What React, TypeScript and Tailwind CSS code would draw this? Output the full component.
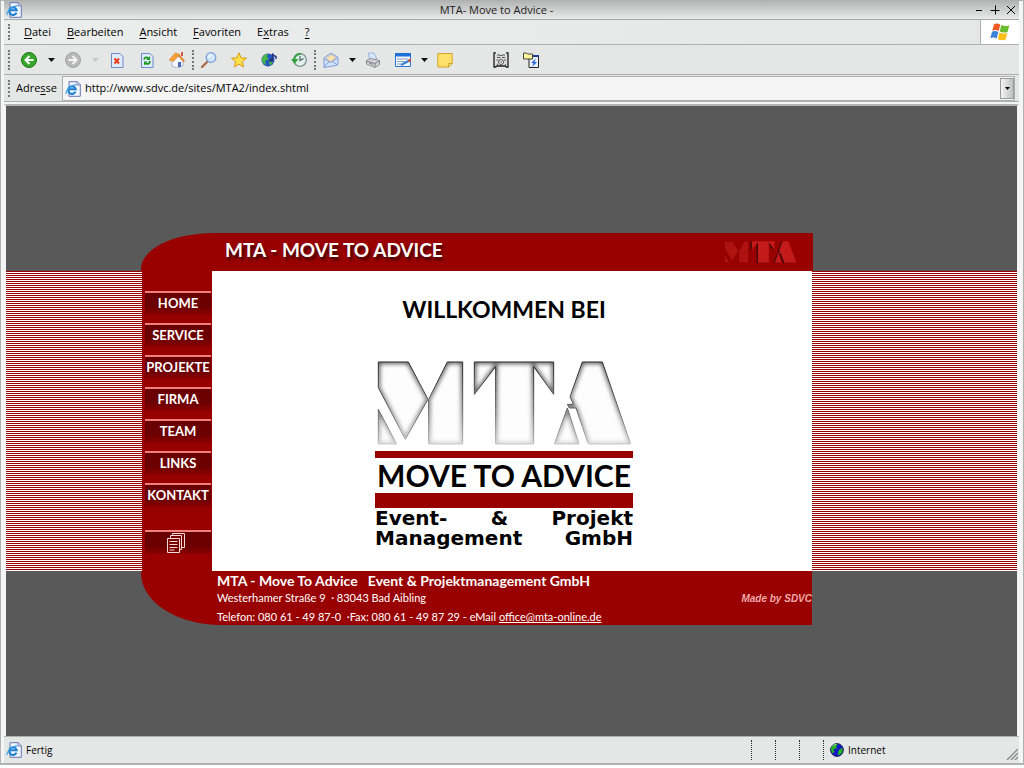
import React from "react";

const LINKS = ["HOME", "SERVICE", "PROJEKTE", "FIRMA", "TEAM", "LINKS", "KONTAKT"];

const MENU = [
    { pre: "", key: "D", post: "atei" },
    { pre: "", key: "B", post: "earbeiten" },
    { pre: "", key: "A", post: "nsicht" },
    { pre: "", key: "F", post: "avoriten" },
    { pre: "E", key: "x", post: "tras" },
    { pre: "", key: "?", post: "" },
];

const M_PATHS = [
    "M55 38H145L204 150L136 270L55 115Z",
    "M262 38H308V284H206V150Z",
    "M55 180L110 284H55Z",
];
const T_PATHS = ["M343 38H581V135L521 52V284H407V52L343 135Z"];
const A_PATHS = [
    "M667 38H727L812 284H685L648 176H628L622 165L640 165L630 142Z",
    "M622 176L657 284H583Z",
];

const BigLogo = () => (
    <svg viewBox="45 29 774 258" className="h-[86px] w-[258px]" role="img" aria-label="MTA">
        <defs>
            <linearGradient id="edge" x1="0" y1="36" x2="0" y2="286" gradientUnits="userSpaceOnUse">
                <stop offset="0" stopColor="#222" />
                <stop offset="0.6" stopColor="#666" />
                <stop offset="0.95" stopColor="#aaa" />
                <stop offset="1" stopColor="#ccc" />
            </linearGradient>
            <filter id="soft" x="-10%" y="-10%" width="120%" height="120%">
                <feGaussianBlur stdDeviation="7" />
            </filter>
        </defs>
        {[...M_PATHS, ...T_PATHS, ...A_PATHS].map((d, i) => (
            <g key={d}>
                <clipPath id={`letter-${i}`}>
                    <path d={d} />
                </clipPath>
                <path d={d} fill="#fdfdfd" />
                <g clipPath={`url(#letter-${i})`}>
                    <path d={d} fill="none" stroke="url(#edge)" strokeWidth="9" filter="url(#soft)" />
                </g>
                <path d={d} fill="none" stroke="url(#edge)" strokeWidth="3" />
            </g>
        ))}
    </svg>
);

const SmallLogo = () => (
    <svg viewBox="50 34 768 254" preserveAspectRatio="none" className="h-[22px] w-[73px]" aria-hidden="true">
        {[...T_PATHS, ...A_PATHS].map((d) => (
            <path key={d} d={d} fill="#3a0a0a" transform="translate(-14 4)" />
        ))}
        {M_PATHS.map((d) => (
            <path key={d} d={d} fill="#b01212" stroke="#7a0505" strokeWidth="5" />
        ))}
        {[...T_PATHS, ...A_PATHS].map((d) => (
            <path key={d} d={d} fill="#c41a1a" />
        ))}
    </svg>
);

const IePage = () => (
    <svg viewBox="0 0 16 16" className="h-4 w-4 shrink-0" aria-hidden="true">
        <path d="M4 .7h8.3L15.300 3.700V15.300H4z" fill="#f2f6ff" stroke="#6577ae" />
        <path d="M12 .7v3.300h3.300" fill="#c7d2ee" stroke="#6577ae" strokeWidth=".8" />
        <path d="M10.500 10.700A3.800 3.800 0 1 1 10.700 8.200H4" fill="none" stroke="#1d7fd0" strokeWidth="2.100" />
        <path d="M1.300 13C-.5 10 7 3.500 11.300 3.800" fill="none" stroke="#3ba0e6" strokeWidth="1.200" />
    </svg>
);

const Globe = () => (
    <svg viewBox="0 0 16 16" className="h-[14px] w-[14px] shrink-0" aria-hidden="true">
        <circle cx="8" cy="8" r="7.300" fill="#1419c8" stroke="#0b1640" />
        <path d="M2 4Q5 0 9 1.500L7 4L8 6L4 7L5 10L3 12Q0 8 2 4z" fill="#21b321" />
        <path d="M10 8L14 5.500Q15.500 9 12.500 12.500L9 14V11z" fill="#21b321" />
        <path d="M3 3.500Q5 1.500 7 2" stroke="#c8f0c0" fill="none" />
    </svg>
);

const WindowsFlag = () => (
    <svg viewBox="0 0 20 18" className="h-[18px] w-5" aria-hidden="true">
        <path d="M4 1.200Q7-.5 10.300 1.500L8.700 8Q5.500 6.200 2.300 7.700z" fill="#ef5a24" />
        <path d="M11.300 2Q15 4 19.300 2.200L17.600 8.900Q13.500 10.500 9.700 8.500z" fill="#6bbb2c" />
        <path d="M2 8.800Q5.200 7.200 8.400 9L6.700 15.500Q3.700 13.800.4 15.300z" fill="#3e82d6" />
        <path d="M9.400 9.500Q13.300 11.500 17.300 9.900L15.700 16.500Q11.700 18.200 7.800 16z" fill="#fbbf17" />
    </svg>
);

const ToolIcon = ({ children }: { children: React.ReactNode }) => (
    <svg viewBox="0 0 16 16" className="h-4 w-4" aria-hidden="true">
        {children}
    </svg>
);

const ToolButton = ({ label, children }: { label: string; children: React.ReactNode }) => (
    <button type="button" aria-label={label} className="flex h-6 w-[30px] items-center justify-center">
        <ToolIcon>{children}</ToolIcon>
    </button>
);

const Caret = ({ label, faded = false, narrow = false }: { label: string; faded?: boolean; narrow?: boolean }) => (
    <button
        type="button"
        aria-label={label}
        className={`flex h-6 items-center justify-center ${narrow ? "w-3" : "w-[14px]"}`}
    >
        <svg viewBox="0 0 7 4" className="h-1 w-[7px]" aria-hidden="true">
            <path d="M0 0h7L3.500 4z" fill={faded ? "#c8c8c8" : "#111"} />
        </svg>
    </button>
);

const Grip = () => <span className="my-1 w-0 self-stretch border-l-2 border-dotted border-[#777]" />;

const Toolbar = () => (
    <div className="flex h-[30px] items-center border-b border-[#adb0ae] bg-[#e5e7e6] pt-px pl-1" role="toolbar">
        <Grip />
        <span className="w-1" />
        <ToolButton label="Zurück">
            <circle cx="8" cy="8" r="7.500" fill="#36a52c" stroke="#1d7a18" />
            <path d="M8.500 4L4.500 8L8.500 12M5 8h7.500" fill="none" stroke="#fff" strokeWidth="2" />
        </ToolButton>
        <Caret label="Zurück-Verlauf" />
        <ToolButton label="Vorwärts">
            <circle cx="8" cy="8" r="7.500" fill="#b9b9b9" stroke="#a2a2a2" />
            <path d="M7.500 4L11.500 8L7.500 12M11 8H3.500" fill="none" stroke="#f4f4f4" strokeWidth="2" />
        </ToolButton>
        <Caret label="Vorwärts-Verlauf" faded />
        <ToolButton label="Abbrechen">
            <path d="M2.500 1.500h8.500l3 3V15.500H2.500z" fill="#dfeafc" stroke="#6a8ac8" />
            <path d="M5.500 6.500l4.500 5M10 6.500l-4.500 5" stroke="#ea3b18" strokeWidth="2" />
        </ToolButton>
        <ToolButton label="Aktualisieren">
            <path d="M2.500 1.500h8.500l3 3V15.500H2.500z" fill="#dfeafc" stroke="#6a8ac8" />
            <path d="M5 7.500Q5.500 5 8 5.500L9.500 6.500M11 9Q10.500 12.500 7.500 11.800L6 11" fill="none" stroke="#159a1b" strokeWidth="1.800" />
            <path d="M11 4v4H7.500zM5 13.500v-4h3.500z" fill="#159a1b" />
        </ToolButton>
        <ToolButton label="Startseite">
            <path d="M3 8v6l5 2 6-2V8L10 4z" fill="#f4f7ff" stroke="#8c9cc4" strokeWidth=".7" />
            <path d="M0 8L6.500.8L10.500 2.500L4.500 9.500z" fill="#f6a13b" stroke="#cf7b1f" strokeWidth=".5" />
            <path d="M10 2L16 9L14.500 10L9.500 4.500z" fill="#e27b1d" />
            <path d="M12 0h2v4h-2z" fill="#d05a3a" />
            <path d="M9 10h3v5H9z" fill="#4c6cb8" />
        </ToolButton>
        <Grip />
        <ToolButton label="Suchen">
            <path d="M1 15L7 9" stroke="#b06a50" strokeWidth="2.400" strokeLinecap="round" />
            <circle cx="10" cy="5.500" r="4.800" fill="#d4e9fd" stroke="#7a9fdc" strokeWidth="1.300" />
            <path d="M7.500 5Q8 3 10 2.800" stroke="#fff" strokeWidth="1.200" fill="none" />
        </ToolButton>
        <ToolButton label="Favoriten">
            <path
                d="M8 .8L10.100 5.800L15.500 6.200L11.400 9.700L12.700 15L8 12.200L3.300 15L4.600 9.700L.5 6.200L5.900 5.800z"
                fill="#fde04a"
                stroke="#d99a17"
            />
        </ToolButton>
        <ToolButton label="Medien">
            <circle cx="7" cy="8" r="6.500" fill="#2456bd" />
            <path d="M1 6Q3 2 7 2L6 5L8 7L4 9L5 13Q0 11 1 6zM8 9l4 1-3 4z" fill="#47b848" />
            <path d="M11.500 8V1.500Q12 4 15 4.500V7" fill="none" stroke="#23337c" strokeWidth="1.400" />
            <circle cx="10.200" cy="8.300" r="1.800" fill="#23337c" />
        </ToolButton>
        <ToolButton label="Verlauf">
            <circle cx="9" cy="8" r="6.300" fill="#e2efec" stroke="#7d948f" strokeWidth="1.300" />
            <path d="M9 4v4.500l3.500-2" stroke="#47645f" strokeWidth="1.200" fill="none" />
            <path d="M3 9Q3 2.500 10 1.800" stroke="#35a142" strokeWidth="2" fill="none" />
            <path d="M0 7h7.500L3.500 12z" fill="#35a142" />
        </ToolButton>
        <Grip />
        <ToolButton label="E-Mail">
            <path d="M1 6L8 1L15 5.500V12L13 13.500L1 15.500z" fill="#cfe1fb" stroke="#7d9ddb" />
            <path d="M3.500 6.500L8 2.500L13 6L8 10z" fill="#fbe3b6" stroke="#d9b27e" strokeWidth=".7" />
            <path d="M1 6.500L7.500 10.500L15 5.500M1 15L6 9.800M14.500 13L9.500 9.500" fill="none" stroke="#7d9ddb" />
        </ToolButton>
        <Caret label="E-Mail-Optionen" narrow />
        <ToolButton label="Drucken">
            <path d="M3 1h6l3 6-7 1z" fill="#d7e6fb" stroke="#8ba7d8" strokeWidth=".8" />
            <path d="M1.500 8.500L5 6.500L14.500 8.500V12.500L10 15.500L1.500 12z" fill="#d4d4d8" stroke="#85868c" strokeWidth=".9" />
            <path d="M1.500 9L10 11.500L14.500 9M10 11.500V15M4 11l4 1.500" fill="none" stroke="#77787e" strokeWidth=".9" />
        </ToolButton>
        <ToolButton label="Bearbeiten">
            <path d="M.5 1.500h15v13H.5z" fill="#f4f8ff" stroke="#2a74d2" />
            <path d="M0 1h16v3.500H0z" fill="#1f71d8" />
            <path d="M2 7h11M2 9.500h8M2 12h4" stroke="#8ba0bd" />
            <path d="M6 13L14.500 8.500" stroke="#3c7fd0" strokeWidth="2.200" />
            <path d="M13.500 9L16 7.700" stroke="#d9442a" strokeWidth="2.500" />
        </ToolButton>
        <Caret label="Bearbeiten mit" narrow />
        <ToolButton label="Diskussion">
            <path d="M.8 1.500h14.400v10L11.500 15H.8z" fill="#fde06c" stroke="#d6a427" />
            <path d="M11.500 15v-3.500h3.700z" fill="#fff4c0" stroke="#d6a427" />
        </ToolButton>
        <span className="w-[26px]" />
        <ToolButton label="Recherchieren">
            <path d="M1 1h1.500L4 2.500h8L13.500 1H15v14h-1.500L12 14H4l-1.500 1H1z" fill="#dcdcdc" />
            <path d="M3 .8H1V15h1.500l1.500-1h8l1.500 1H15V.8h-2" fill="none" stroke="#1c1c1c" strokeWidth="1.300" />
            <path d="M4 3h3l1 1 1-1h3M4 5.500h3.500M9 5.500h3M3.500 8h2M11 8h2M4 12.500h1M12 12.500h1" fill="none" stroke="#555" />
            <circle cx="8" cy="10" r="2.500" fill="#f2f2f2" stroke="#555" />
            <circle cx="8" cy="10" r=".8" fill="#444" />
        </ToolButton>
        <ToolButton label="Übertragen">
            <path d="M6 4.500h9.500v11H6z" fill="#eef2fb" stroke="#222" />
            <path d="M9.500 4H16" stroke="#1c3f9c" strokeWidth="2" />
            <path d="M.5 1h3l1 1h5v5h-9z" fill="#fbf49a" stroke="#333" strokeWidth=".9" />
            <path d="M13 6.500L8 10.800L10.500 11.300L9 15L14 10.200L11.500 9.800z" fill="#2b6be0" />
        </ToolButton>
    </div>
);

const TitleBar = () => (
    <div className="flex h-[19px] items-center border-b border-[#a5a8a6] bg-linear-to-b from-[#b2b5b3] to-[#e9ebea] pl-[2px]">
        <IePage />
        <h1 className="flex-1 text-center text-[11px] leading-4 text-[#222]">MTA- Move to Advice -</h1>
        <div className="flex items-center text-black">
            <button type="button" aria-label="Minimieren" className="flex h-4 w-4 items-center justify-center">
                <svg viewBox="0 0 10 10" className="h-[10px] w-[10px]"><path d="M2 5.500h6" stroke="currentColor" /></svg>
            </button>
            <button type="button" aria-label="Maximieren" className="flex h-4 w-4 items-center justify-center">
                <svg viewBox="0 0 10 10" className="h-[10px] w-[10px]"><path d="M.5 5.500h9M5.500.5v9" stroke="currentColor" /></svg>
            </button>
            <button type="button" aria-label="Schließen" className="flex h-4 w-4 items-center justify-center">
                <svg viewBox="0 0 10 10" className="h-[10px] w-[10px]"><path d="M1 1l8 8M9 1L1 9" stroke="currentColor" /></svg>
            </button>
        </div>
    </div>
);

const MenuBar = () => (
    <div className="flex h-[25px] items-stretch border-b border-[#adb0ae] bg-linear-to-r from-[#eceeed] to-[#e5e7e6] pl-1">
        <Grip />
        <nav className="flex flex-1 items-center gap-4 pl-[14px] text-[11px]">
            {MENU.map(({ pre, key, post }) => (
                <button key={key} type="button">
                    {pre}
                    <span className="underline underline-offset-2">{key}</span>
                    {post}
                </button>
            ))}
        </nav>
        <div className="flex w-[39px] items-center justify-center border-l border-[#adb0ae] bg-white">
            <WindowsFlag />
        </div>
    </div>
);

const AddressBar = () => (
    <div className="flex h-[27px] items-stretch border-b border-[#adb0ae] bg-[#e5e7e6] pt-px pr-1 pl-1">
        <Grip />
        <label htmlFor="address" className="flex w-[52px] items-center pl-[6px] text-[11px]">
            <span>Adre<span className="underline underline-offset-2">s</span>se</span>
        </label>
        <div className="flex flex-1 items-center border border-[#adb0ae] bg-[#f5f5f5] pl-[2px]">
            <IePage />
            <input
                id="address"
                type="text"
                defaultValue="http://www.sdvc.de/sites/MTA2/index.shtml"
                className="min-w-0 flex-1 bg-transparent pl-1 text-[11px] outline-none"
            />
            <button
                type="button"
                aria-label="Adressliste"
                className="my-px flex w-[14px] items-center justify-center self-stretch border border-[#999] bg-linear-to-r from-[#f4f4f4] to-[#bfc1c0]"
            >
                <svg viewBox="0 0 5 3" className="h-[3px] w-[5px]"><path d="M0 0h5L2.500 3z" /></svg>
            </button>
        </div>
    </div>
);

const navItem =
    "border-t-2 border-[#f08080] bg-linear-to-b from-[#6b0000] from-60% to-[#8a0000]";

const SideNav = () => (
    <nav className="w-[70px] shrink-0 bg-[#990000] pt-5 pr-px pl-[3px]">
        <ul>
            {LINKS.map((name) => (
                <li key={name} className="h-8">
                    <a
                        href="#"
                        className={`flex h-6 items-center justify-center text-[13px] font-bold text-white ${navItem}`}
                    >
                        {name}
                    </a>
                </li>
            ))}
        </ul>
        <a href="#" aria-label="Seiten" className={`mt-[15px] flex h-6 items-center justify-center pr-1 ${navItem}`}>
            <svg viewBox="0 0 18 20" className="h-5 w-[18px]" fill="#7a0000" stroke="#f6dada">
                <path d="M5.500.5h12v14h-12z" />
                <path d="M3.500 2.500h11v14h-11z" />
                <path d="M.5 5.500h12v14H.5z" />
                <path d="M2.500 8.500h8M2.500 11.500h8M2.500 14.500h8M2.500 17h5" />
            </svg>
        </a>
    </nav>
);

const Page = () => (
    <div className="flex flex-1 flex-col border-x-2 border-t-2 border-[#f5f5f5] border-t-[#b4b4b4] bg-[#595959] font-['Lato',sans-serif]">
        <div className="flex grow basis-0 items-end pl-[135px]">
            <header className="flex h-[38px] w-[672px] items-center justify-between rounded-tl-[72px_36px] bg-[#990000] pr-4 pl-[84px]">
                <h2 className="pb-[5px] text-[19px] leading-6 font-bold text-white [text-shadow:2px_3px_3px_#3a0000]">
                    MTA - MOVE TO ADVICE
                </h2>
                <SmallLogo />
            </header>
        </div>

        <div className="flex bg-[repeating-linear-gradient(to_bottom,#990000_0px,#990000_1px,#ffffff_1px,#ffffff_2px)] pl-[136px]">
            <SideNav />
            <main className="flex h-[300px] w-[600px] flex-col items-center bg-white pt-6 pr-4 text-black">
                <h2 className="text-[23px] leading-7 font-bold">WILLKOMMEN BEI</h2>
                <div className="mt-9 flex w-[258px] flex-col items-center">
                    <BigLogo />
                    <div className="mt-[6px] h-[7px] w-full bg-[#990000]" />
                    <p className="text-[30px] leading-[35px] font-bold whitespace-nowrap">MOVE TO ADVICE</p>
                    <div className="h-[15px] w-full bg-[#990000]" />
                    <div className="w-full font-['DejaVu_Sans',sans-serif] text-[20px] leading-5 font-bold whitespace-nowrap">
                        <p className="flex justify-between">
                            <span>Event-</span> <span>&amp;</span> <span>Projekt</span>
                        </p>
                        <p className="flex justify-between">
                            <span>Management</span> <span>GmbH</span>
                        </p>
                    </div>
                </div>
            </main>
        </div>

        <div className="flex grow basis-0 items-start pl-[135px]">
            <footer className="flex h-[54px] w-[671px] items-center justify-between rounded-bl-[80px_52px] bg-[#990000] pl-[76px] text-white">
                <div className="pt-1 text-[11px] whitespace-nowrap">
                    <p className="text-[14px] leading-[18px] font-bold">
                        MTA - Move To Advice &nbsp; Event &amp; Projektmanagement GmbH
                    </p>
                    <p className="leading-4">Westerhamer Straße 9 &nbsp;· 83043 Bad Aibling</p>
                    <p className="leading-[22px]">
                        Telefon: 080 61 - 49 87-0 &nbsp;·Fax: 080 61 - 49 87 29 - eMail{" "}
                        <a href="mailto:office@mta-online.de" className="underline">office@mta-online.de</a>
                    </p>
                </div>
                <p className="font-['Liberation_Sans',sans-serif] text-[10px] font-bold text-[#f0a8a8] italic">
                    Made by SDVC
                </p>
            </footer>
        </div>
    </div>
);

const StatusBar = () => (
    <div className="flex h-[27px] items-stretch border-t border-[#adb0ae] bg-[#e5e7e6] pl-[2px] text-[10px]">
        <div className="flex flex-1 items-center gap-1">
            <IePage />
            <span>Fertig</span>
        </div>
        <div className="flex w-[268px] items-stretch py-[3px]">
            <span className="w-6 border-l border-dotted border-[#333]" />
            <span className="w-6 border-l border-dotted border-[#333]" />
            <span className="w-6 border-l border-dotted border-[#333]" />
            <div className="flex flex-1 items-center gap-1 border-l border-dotted border-[#333] pl-[6px]">
                <Globe />
                <span>Internet</span>
            </div>
            <svg viewBox="0 0 12 12" className="mr-px h-3 w-3 self-end" aria-hidden="true">
                <path d="M1 12L12 1M5 12L12 5M9 12L12 9" stroke="#8e8e8e" strokeWidth="1.500" />
            </svg>
        </div>
    </div>
);

const App = (): React.JSX.Element => {
    return (
        <div className="flex min-h-screen flex-col bg-white pb-[3px] font-['Open_Sans',sans-serif] text-black">
            <div className="flex flex-1 flex-col border border-b-2 border-[#b0b2b1] bg-[#f5f5f5] pr-1 pl-[3px]">
                <TitleBar />
                <MenuBar />
                <Toolbar />
                <AddressBar />
                <div className="h-[2px]" />
                <Page />
                <StatusBar />
            </div>
        </div>
    );
};

export default App;
